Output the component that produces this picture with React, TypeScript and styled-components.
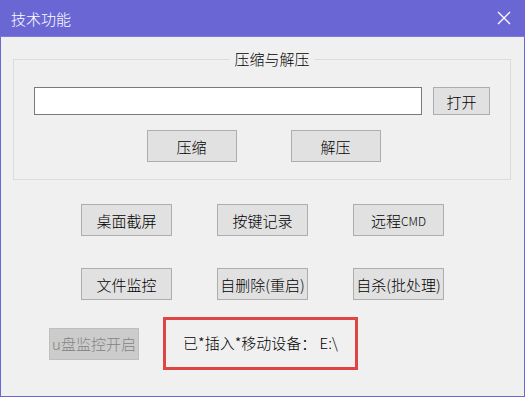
import React from 'react';
import styled, { createGlobalStyle } from 'styled-components';

const GlobalStyle = createGlobalStyle`
  html, body {
    margin: 0;
    padding: 0;
    background: #f0f0f0;
  }
  * {
    box-sizing: border-box;
  }
`;

const FONT = `"Noto Sans CJK SC", "Noto Sans", sans-serif`;

const Window = styled.div`
  width: 525px;
  height: 397px;
  border: 1px solid #6a67d4;
  border-top: none;
  background: #f0f0f0;
  font-family: ${FONT};
  font-size: 15px;
  font-weight: 300;
  color: #000;
  display: flex;
  flex-direction: column;
`;

const TitleBar = styled.div`
  height: 37px;
  margin: 0 -1px;
  padding: 0 14px 0 11px;
  background: #6a67d4;
  border-bottom: 1px solid #7d7bd8;
  display: flex;
  align-items: center;
  justify-content: space-between;
  color: #fff;
  font-size: 15px;
`;

const CloseIcon = styled.svg`
  width: 14px;
  height: 14px;
`;

const GroupBox = styled.fieldset`
  margin: 12px 13px 0 12px;
  padding: 18px 0 17px 20px;
  border: 1px solid #dcdcdc;
  min-width: 0;
  display: flex;
  flex-direction: column;
  gap: 15px;
`;

const Legend = styled.legend`
  margin: 0 auto;
  padding: 0 4px;
  line-height: 20px;
  font-size: 15px;
`;

const InputRow = styled.div`
  display: flex;
  gap: 11px;
`;

const PathInput = styled.input`
  width: 388px;
  height: 28px;
  border: 1px solid #7a7a7a;
  background: #fff;
  outline: none;
`;

const Button = styled.button<{ $w?: number; $h?: number }>`
  width: ${(p) => p.$w ?? 91}px;
  height: ${(p) => p.$h ?? 32}px;
  padding: 0;
  border: 1px solid #adadad;
  background: #e1e1e1;
  font-family: ${FONT};
  font-size: 15px;
  font-weight: 300;
  color: #000;
  white-space: nowrap;
  display: flex;
  align-items: center;
  justify-content: center;

  &:disabled {
    border-color: #bfbfbf;
    background: #cccccc;
    color: #838383;
  }
`;

const Small = styled.span`
  font-size: 12px;
`;

const ActionRow = styled.div`
  display: flex;
  justify-content: center;
  gap: 54px;
  padding-right: 17px;
`;

const FunctionGrid = styled.div`
  margin: 24px 0 0 80px;
  display: grid;
  grid-template-columns: repeat(3, 91px);
  column-gap: 45px;
  row-gap: 32px;
`;

const StatusRow = styled.div`
  margin: 17px 0 0 48px;
  display: flex;
  align-items: center;
  gap: 24px;
`;

const StatusBox = styled.div`
  width: 195px;
  height: 53px;
  border: 3px solid #e04545;
  padding: 0 0 2px 17px;
  display: flex;
  align-items: center;
  white-space: nowrap;
`;

const App = (): JSX.Element => (
  <>
    <GlobalStyle />
    <Window>
      <TitleBar>
        <span>技术功能</span>
        <CloseIcon viewBox="0 0 14 14">
          <path d="M1 1 L13 13 M13 1 L1 13" stroke="#fff" strokeWidth="1.3" fill="none" />
        </CloseIcon>
      </TitleBar>
      <GroupBox>
        <Legend>压缩与解压</Legend>
        <InputRow>
          <PathInput type="text" />
          <Button $w={57} $h={28}>打开</Button>
        </InputRow>
        <ActionRow>
          <Button $w={90}>压缩</Button>
          <Button $w={90}>解压</Button>
        </ActionRow>
      </GroupBox>
      <FunctionGrid>
        <Button>桌面截屏</Button>
        <Button>按键记录</Button>
        <Button>远程<Small>CMD</Small></Button>
        <Button>文件监控</Button>
        <Button>自删除(重启)</Button>
        <Button>自杀(批处理)</Button>
      </FunctionGrid>
      <StatusRow>
        <Button $w={90} disabled>u盘监控开启</Button>
        <StatusBox>已*插入*移动设备： E:\</StatusBox>
      </StatusRow>
    </Window>
  </>
);

export default App;
